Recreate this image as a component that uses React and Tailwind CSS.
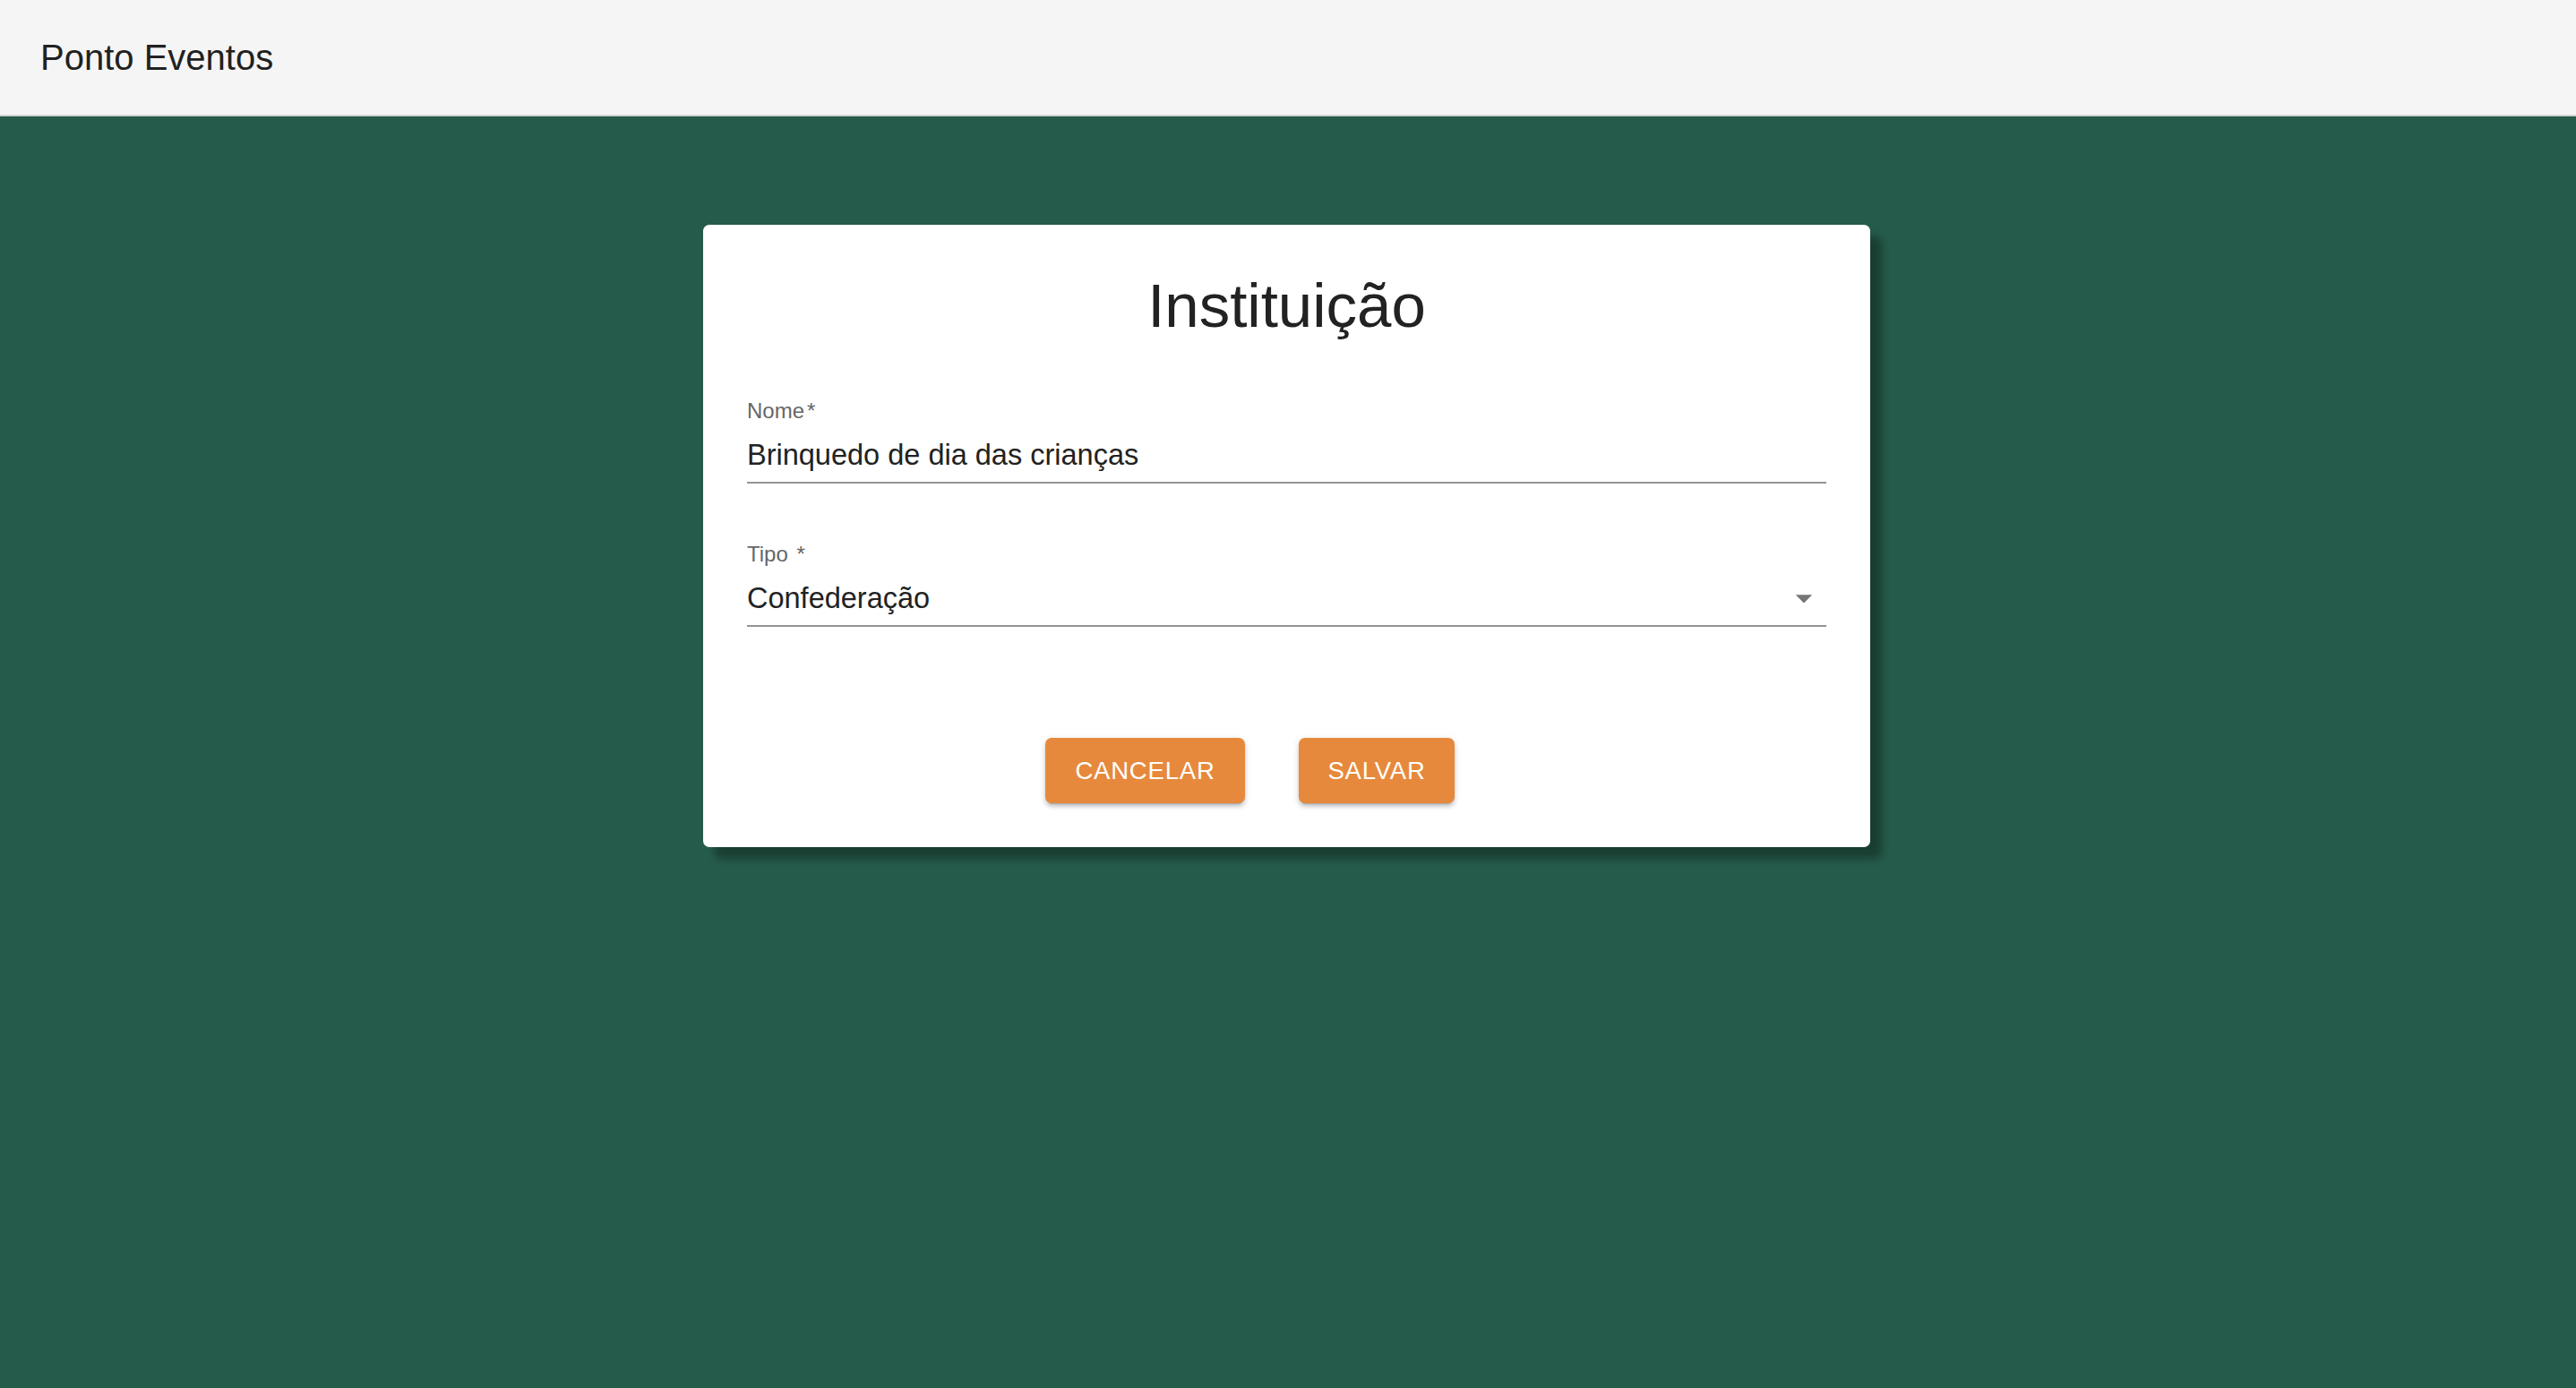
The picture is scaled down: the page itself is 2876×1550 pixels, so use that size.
import React from 'react';

const font = { fontFamily: '"Liberation Sans", Arial, Helvetica, sans-serif' };

function Field({ label, value, select }) {
    return (
        <div>
            <div className="text-[24px] leading-none text-[#666666] h-[24px]">
                {label}<span className="ml-[3px]">*</span>
            </div>
            <div className="mt-[21px] border-b-2 border-[#949494] pb-[14px] flex items-center justify-between">
                <span className="text-[32.5px] leading-none text-[#222222] h-[32px]">{value}</span>
                {select && (
                    <svg width="44" height="44" viewBox="0 0 24 24" className="-my-[6px] mr-[3px]">
                        <path d="M7 10l5 5 5-5z" fill="#757575" />
                    </svg>
                )}
            </div>
        </div>
    );
}

export default function App() {
    return (
        <div className="min-h-screen bg-[#255b4a]" style={font}>
            <header className="h-[130px] bg-[#f5f5f5] border-b-2 border-[#d2d2d2] flex items-center pl-[45px]">
                <h1 className="text-[40px] leading-none text-[#212121]">Ponto Eventos</h1>
            </header>

            <main className="pt-[121px] flex justify-center pr-[3px]">
                <div className="w-[1303px] bg-white rounded-[7px] shadow-[13px_13px_9px_rgba(0,0,0,0.32)] px-[49px] pt-[56px] pb-[49px]">
                    <h2 className="text-[69px] leading-none text-center text-[#222222] h-[69px]">Instituição</h2>

                    <div className="mt-[71px]">
                        <Field label="Nome" value="Brinquedo de dia das crianças" />
                    </div>

                    <div className="mt-[67px]">
                        <Field label="Tipo " value="Confederação" select />
                    </div>

                    {/* botoes */}
                    <div className="mt-[124px] flex justify-center gap-[60px] pr-[82px]">
                        <button className="w-[223px] h-[73px] rounded-[7px] bg-[#e7893c] text-white text-[27.5px] tracking-[0.8px] shadow-[0_5px_2px_-4px_rgba(0,0,0,0.2),0_4px_4px_0_rgba(0,0,0,0.14),0_2px_9px_0_rgba(0,0,0,0.12)]">
                            CANCELAR
                        </button>
                        <button className="w-[174px] h-[73px] rounded-[7px] bg-[#e7893c] text-white text-[27.5px] tracking-[0.8px] shadow-[0_5px_2px_-4px_rgba(0,0,0,0.2),0_4px_4px_0_rgba(0,0,0,0.14),0_2px_9px_0_rgba(0,0,0,0.12)]">
                            SALVAR
                        </button>
                    </div>
                </div>
            </main>
        </div>
    );
}
